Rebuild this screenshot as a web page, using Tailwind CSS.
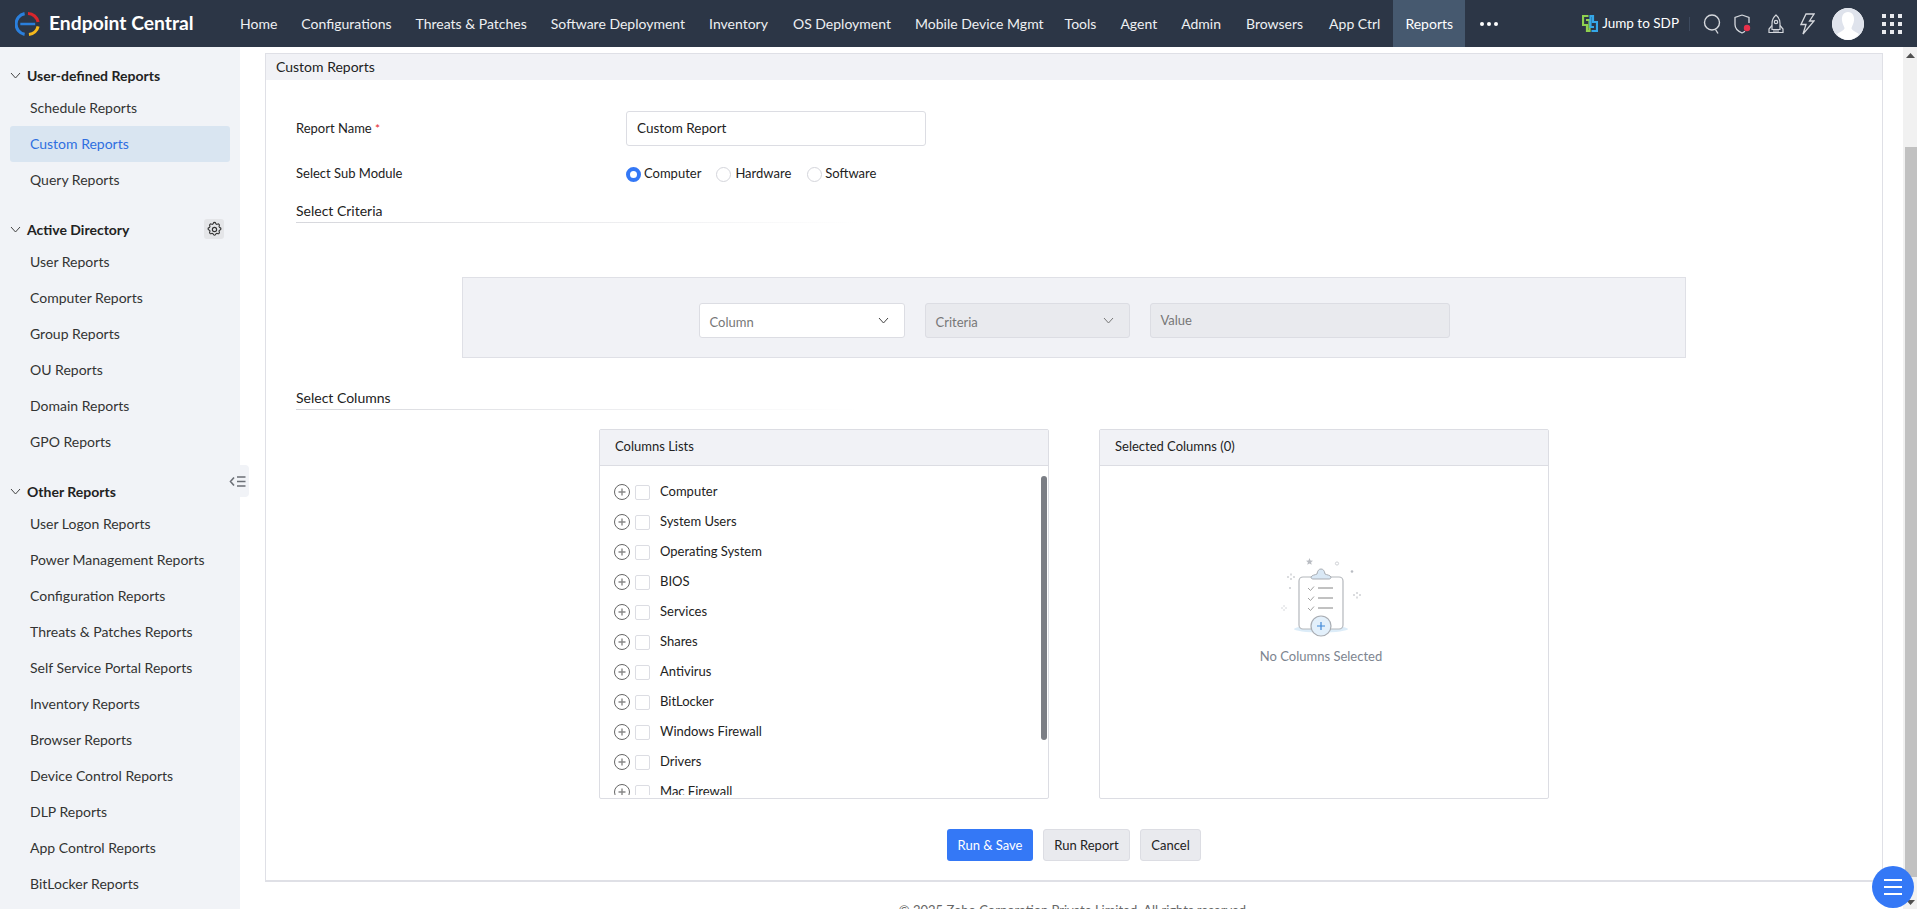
<!DOCTYPE html>
<html lang="en">
<head>
    <meta charset="UTF-8">
    <meta name="viewport" content="width=device-width, initial-scale=1.0">
    <title>Endpoint Central: Custom Reports</title>
    <script src="https://cdn.jsdelivr.net/npm/@tailwindcss/browser@4"></script>
</head>
<body class="h-[909px] overflow-hidden flex flex-col relative bg-white text-[14px] text-[#222] [font-family:Lato,sans-serif]">
    <!-- Navbar -->
    <nav class="h-[47px] shrink-0 bg-[#2c3646] flex items-center text-[#eef0f3]">
        <div class="w-[228px] shrink-0 flex items-center pl-[15px]">
            <svg class="w-[25px] h-[26px]" viewBox="0 0 26 26" fill="none">
                <path d="M10 2.200A11 11 0 0 0 10 23.800" stroke="#2a7fdc" stroke-width="3.200"/>
                <path d="M5.500 13H21" stroke="#2a7fdc" stroke-width="2.600"/>
                <path d="M13.500 2A11 11 0 0 1 24 11" stroke="#d8262c" stroke-width="3.200"/>
                <path d="M24 15.500A11 11 0 0 1 14.500 24" stroke="#f5b81c" stroke-width="3.200"/>
            </svg>
            <span class="ml-[9px] text-[19.300px] font-bold text-white whitespace-nowrap">Endpoint Central</span>
        </div>
        <a class="px-3 h-full flex items-center whitespace-nowrap">Home</a>
        <a class="px-3 h-full flex items-center whitespace-nowrap">Configurations</a>
        <a class="px-3 h-full flex items-center whitespace-nowrap">Threats &amp; Patches</a>
        <a class="px-3 h-full flex items-center whitespace-nowrap">Software Deployment</a>
        <a class="px-3 h-full flex items-center whitespace-nowrap">Inventory</a>
        <a class="px-3 h-full flex items-center whitespace-nowrap ml-[1px]">OS Deployment</a>
        <a class="px-3 h-full flex items-center whitespace-nowrap">Mobile Device Mgmt</a>
        <a class="px-3 h-full flex items-center whitespace-nowrap ml-[-3px]">Tools</a>
        <a class="px-3 h-full flex items-center whitespace-nowrap">Agent</a>
        <a class="px-3 h-full flex items-center whitespace-nowrap">Admin</a>
        <a class="px-3 h-full flex items-center whitespace-nowrap ml-[1px]">Browsers</a>
        <a class="px-3 h-full flex items-center whitespace-nowrap ml-[2px]">App Ctrl</a>
        <a class="px-3 h-full flex items-center whitespace-nowrap ml-[1px] bg-[#46596f] text-white">Reports</a>
        <div class="ml-[15px] flex gap-[3px]">
            <span class="w-[4px] h-[4px] rounded-full bg-white"></span>
            <span class="w-[4px] h-[4px] rounded-full bg-white"></span>
            <span class="w-[4px] h-[4px] rounded-full bg-white"></span>
        </div>

        <div class="ml-auto flex items-center h-full">
            <svg class="w-[16px] h-[17px]" viewBox="0 0 16 17" fill="none" stroke-width="2.200">
                <path d="M6.500 1H1V10H5V16H7.500V5H4" stroke="#8fd14f"/>
                <path d="M9.500 16H15V7H11V1H8.500V12H12" stroke="#35a7e8"/>
            </svg>
            <span class="ml-[4px] whitespace-nowrap text-[13.500px] text-white">Jump to SDP</span>
            <span class="ml-[10px] w-px h-[14px] bg-[#3d4a5e]"></span>
            <svg class="ml-[13px] w-[18px] h-[20px]" viewBox="0 0 18 20" fill="none" stroke="#d5d8dd" stroke-width="1.400">
                <circle cx="9" cy="8.500" r="7.500"/>
                <path d="M12.500 15.500L15 19.500"/>
            </svg>
            <svg class="ml-[13px] w-[18px] h-[20px]" viewBox="0 0 18 20" fill="none">
                <path d="M8 1L15 3.500V9M8 1L1 3.500V10.500C1 14.500 4.500 17.500 8 19C9 18.600 10 18 11 17.200" stroke="#d5d8dd" stroke-width="1.300"/>
                <circle cx="13" cy="14" r="3.200" fill="#e8304a"/>
            </svg>
            <svg class="ml-[15px] w-[18px] h-[20px]" viewBox="0 0 18 20" fill="none" stroke="#d5d8dd" stroke-width="1.200">
                <path d="M9 1C12 3.500 13 6.500 13 9.500V15.500H5V9.500C5 6.500 6 3.500 9 1Z"/>
                <circle cx="9" cy="8" r="1.700"/>
                <path d="M5 11.500L2 15V18.500H16V15L13 11.500M6 17H12"/>
            </svg>
            <svg class="ml-[15px] w-[15px] h-[22px]" viewBox="0 0 15 22" fill="none" stroke="#d5d8dd" stroke-width="1.300">
                <path d="M6 1H14L9.500 8H14L3 21L6 11.500H1L6 1Z"/>
            </svg>
            <div class="ml-[17px] w-[32px] h-[32px] rounded-full bg-white overflow-hidden">
                <svg class="w-full h-full" viewBox="0 0 32 32">
                    <circle cx="16" cy="16" r="16" fill="#dfe3ec"/>
                    <path d="M16 4C20.500 4 22.500 8 22 12.500C21.700 16 20 18 19.500 20C19.200 22 24 24 27 26C24 30 20 32 16 32C12 32 8 30 5 26C8 24 12.800 22 12.500 20C12 18 10.300 16 10 12.500C9.500 8 11.500 4 16 4Z" fill="#fff"/>
                </svg>
            </div>
            <div class="ml-[18px] mr-[15px] grid grid-cols-3 gap-[4px]">
                <span class="w-[4px] h-[4px] bg-[#e8eaee]"></span><span class="w-[4px] h-[4px] bg-[#e8eaee]"></span><span class="w-[4px] h-[4px] bg-[#e8eaee]"></span>
                <span class="w-[4px] h-[4px] bg-[#e8eaee]"></span><span class="w-[4px] h-[4px] bg-[#e8eaee]"></span><span class="w-[4px] h-[4px] bg-[#e8eaee]"></span>
                <span class="w-[4px] h-[4px] bg-[#e8eaee]"></span><span class="w-[4px] h-[4px] bg-[#e8eaee]"></span><span class="w-[4px] h-[4px] bg-[#e8eaee]"></span>
            </div>
        </div>
    </nav>

    <div class="flex flex-1 min-h-0">
        <!-- Sidebar -->
        <aside class="w-[240px] shrink-0 bg-[#f1f3f7] pt-[15px] relative">
            <div class="h-[28px] pb-[2px] flex items-center pl-[10px] font-bold text-[#222]">
                <svg class="w-[11px] h-[7px] mr-[6px]" viewBox="0 0 11 7" fill="none" stroke="#444"><path d="M1 1L5.500 6L10 1"/></svg>User-defined Reports
            </div>
            <a class="block h-[36px] leading-[36px] pl-[30px] text-[#333]">Schedule Reports</a>
            <a class="block h-[36px] leading-[36px] pl-[20px] ml-[10px] w-[220px] rounded-[3px] bg-[#d9e5f1] text-[#2f6fe0]">Custom Reports</a>
            <a class="block h-[36px] leading-[36px] pl-[30px] text-[#333]">Query Reports</a>

            <div class="mt-[18px] h-[28px] pb-[2px] flex items-center pl-[10px] font-bold text-[#222]">
                <svg class="w-[11px] h-[7px] mr-[6px]" viewBox="0 0 11 7" fill="none" stroke="#444"><path d="M1 1L5.500 6L10 1"/></svg>Active Directory
                <span class="ml-auto mr-[16px] w-[20px] h-[20px] rounded-[3px] bg-[#e4e5e8] flex items-center justify-center">
                    <svg class="w-[17px] h-[17px]" viewBox="0 0 24 24" fill="none" stroke="#333" stroke-width="1.600">
                        <path d="M10.300 3.300c.4-1.700 3-1.700 3.400 0a1.700 1.700 0 0 0 2.600 1.100c1.500-.9 3.300.8 2.400 2.400a1.700 1.700 0 0 0 1 2.500c1.800.4 1.800 3 0 3.400a1.700 1.700 0 0 0-1 2.600c.9 1.500-.9 3.300-2.400 2.400a1.700 1.700 0 0 0-2.600 1c-.4 1.800-3 1.800-3.400 0a1.700 1.700 0 0 0-2.600-1c-1.500.9-3.300-.9-2.400-2.400a1.700 1.700 0 0 0-1-2.600c-1.800-.4-1.800-3 0-3.400a1.700 1.700 0 0 0 1-2.500c-.9-1.600.9-3.300 2.400-2.400a1.700 1.700 0 0 0 2.600-1.100Z"/>
                        <circle cx="12" cy="12" r="3"/>
                    </svg>
                </span>
            </div>
            <a class="block h-[36px] leading-[36px] pl-[30px] text-[#333]">User Reports</a>
            <a class="block h-[36px] leading-[36px] pl-[30px] text-[#333]">Computer Reports</a>
            <a class="block h-[36px] leading-[36px] pl-[30px] text-[#333]">Group Reports</a>
            <a class="block h-[36px] leading-[36px] pl-[30px] text-[#333]">OU Reports</a>
            <a class="block h-[36px] leading-[36px] pl-[30px] text-[#333]">Domain Reports</a>
            <a class="block h-[36px] leading-[36px] pl-[30px] text-[#333]">GPO Reports</a>

            <div class="mt-[18px] h-[28px] pb-[2px] flex items-center pl-[10px] font-bold text-[#222]">
                <svg class="w-[11px] h-[7px] mr-[6px]" viewBox="0 0 11 7" fill="none" stroke="#444"><path d="M1 1L5.500 6L10 1"/></svg>Other Reports
            </div>
            <a class="block h-[36px] leading-[36px] pl-[30px] text-[#333]">User Logon Reports</a>
            <a class="block h-[36px] leading-[36px] pl-[30px] text-[#333]">Power Management Reports</a>
            <a class="block h-[36px] leading-[36px] pl-[30px] text-[#333]">Configuration Reports</a>
            <a class="block h-[36px] leading-[36px] pl-[30px] text-[#333]">Threats &amp; Patches Reports</a>
            <a class="block h-[36px] leading-[36px] pl-[30px] text-[#333]">Self Service Portal Reports</a>
            <a class="block h-[36px] leading-[36px] pl-[30px] text-[#333]">Inventory Reports</a>
            <a class="block h-[36px] leading-[36px] pl-[30px] text-[#333]">Browser Reports</a>
            <a class="block h-[36px] leading-[36px] pl-[30px] text-[#333]">Device Control Reports</a>
            <a class="block h-[36px] leading-[36px] pl-[30px] text-[#333]">DLP Reports</a>
            <a class="block h-[36px] leading-[36px] pl-[30px] text-[#333]">App Control Reports</a>
            <a class="block h-[36px] leading-[36px] pl-[30px] text-[#333]">BitLocker Reports</a>

            <!-- collapse handle -->
            <div class="absolute top-[418px] left-[226px] w-[23px] h-[32px] rounded-r-[4px] bg-[#f1f3f7] flex items-center justify-center">
                <svg class="w-[17px] h-[13px]" viewBox="0 0 17 13" fill="none" stroke="#6b6f76" stroke-width="1.600">
                    <path d="M5 2.500L1.500 6.500L5 10.500M8 2H16.500M8 6.500H16.500M8 11H16.500"/>
                </svg>
            </div>
        </aside>

        <!-- Content -->
        <main class="flex-1 min-w-0 pt-[6px] pl-[25px] pr-[20px]">
            <section class="h-[829px] border border-[#dfe0e6] border-b-2">
                <h2 class="h-[26px] leading-[26px] pl-[10px] bg-[#f1f2f6] text-[#222]">Custom Reports</h2>

                <div class="pt-[31px] pl-[30px] text-[13px]">
                    <div class="flex items-center h-[35px]">
                        <label class="w-[330px]">Report Name <span class="text-[#e5262c] text-[12px] leading-none">*</span></label>
                        <div class="w-[300px] h-[35px] rounded-[3px] border border-[#dcdde3] px-[10px] leading-[33px] text-[13.500px]">Custom Report</div>
                    </div>
                    <div class="mt-[18px] flex items-center h-[20px]">
                        <label class="w-[330px]">Select Sub Module</label>
                        <span class="w-[15px] h-[15px] rounded-full border-[4px] border-[#3478f6] bg-white"></span>
                        <span class="ml-[3px]">Computer</span>
                        <span class="ml-[15px] w-[15px] h-[15px] rounded-full border border-[#d4d5db]"></span>
                        <span class="ml-[4px]">Hardware</span>
                        <span class="ml-[16px] w-[15px] h-[15px] rounded-full border border-[#d4d5db]"></span>
                        <span class="ml-[3px]">Software</span>
                    </div>
                    <h3 class="mt-[16px] h-[22px] leading-[21px] text-[14px] text-[#222]">Select Criteria</h3>
                    <div class="w-[564px] h-px bg-gradient-to-r from-[#d6d7dc] to-transparent"></div>
                </div>

                <div class="mt-[54px] mx-auto w-[1224px] h-[81px] bg-[#f1f2f6] border border-[#dfe0e6] flex justify-center gap-[20px] pt-[25px] text-[13px]">
                    <div class="w-[206px] h-[35px] rounded-[3px] border border-[#dcdde3] bg-white pl-[10px] pr-[15px] flex items-center justify-between text-[#777]">
                        <span class="pt-[4px]">Column</span>
                        <svg class="w-[11px] h-[7px]" viewBox="0 0 11 7" fill="none" stroke="#444"><path d="M1 1L5.500 6L10 1"/></svg>
                    </div>
                    <div class="w-[205px] h-[35px] rounded-[3px] border border-[#dcdde3] bg-[#e9eaee] pl-[10px] pr-[15px] flex items-center justify-between text-[#777]">
                        <span class="pt-[4px]">Criteria</span>
                        <svg class="w-[11px] h-[7px]" viewBox="0 0 11 7" fill="none" stroke="#777"><path d="M1 1L5.500 6L10 1"/></svg>
                    </div>
                    <div class="w-[300px] h-[35px] rounded-[3px] border border-[#dcdde3] bg-[#e9eaee] pl-[10px] leading-[32px] text-[#777]">Value</div>
                </div>

                <div class="pt-[29px] pl-[30px]">
                    <h3 class="h-[22px] leading-[21px] text-[#222]">Select Columns</h3>
                    <div class="w-[564px] h-px bg-gradient-to-r from-[#d6d7dc] to-transparent"></div>
                </div>

                <div class="mt-[19px] flex justify-center gap-[50px] text-[13px]">
                    <div class="w-[450px] h-[370px] rounded-[2px] border border-[#dcdde3] relative">
                        <div class="h-[36px] leading-[33px] pl-[15px] bg-[#f1f2f6] border-b border-[#dcdde3]">Columns Lists</div>
                        <div class="h-[329px] overflow-hidden pt-[11px] pl-[14px]">
                            <div class="h-[30px] flex items-center">
                                <svg class="w-[16px] h-[16px]" viewBox="0 0 16 16" fill="none" stroke="#666"><circle cx="8" cy="8" r="7.500"/><path d="M4.500 8H11.500M8 4.500V11.500" stroke="#888" stroke-width="1.400"/></svg>
                                <span class="ml-[5px] w-[15px] h-[15px] rounded-[2px] border border-[#dcdde3]"></span>
                                <span class="ml-[10px]">Computer</span>
                            </div>
                            <div class="h-[30px] flex items-center">
                                <svg class="w-[16px] h-[16px]" viewBox="0 0 16 16" fill="none" stroke="#666"><circle cx="8" cy="8" r="7.500"/><path d="M4.500 8H11.500M8 4.500V11.500" stroke="#888" stroke-width="1.400"/></svg>
                                <span class="ml-[5px] w-[15px] h-[15px] rounded-[2px] border border-[#dcdde3]"></span>
                                <span class="ml-[10px]">System Users</span>
                            </div>
                            <div class="h-[30px] flex items-center">
                                <svg class="w-[16px] h-[16px]" viewBox="0 0 16 16" fill="none" stroke="#666"><circle cx="8" cy="8" r="7.500"/><path d="M4.500 8H11.500M8 4.500V11.500" stroke="#888" stroke-width="1.400"/></svg>
                                <span class="ml-[5px] w-[15px] h-[15px] rounded-[2px] border border-[#dcdde3]"></span>
                                <span class="ml-[10px]">Operating System</span>
                            </div>
                            <div class="h-[30px] flex items-center">
                                <svg class="w-[16px] h-[16px]" viewBox="0 0 16 16" fill="none" stroke="#666"><circle cx="8" cy="8" r="7.500"/><path d="M4.500 8H11.500M8 4.500V11.500" stroke="#888" stroke-width="1.400"/></svg>
                                <span class="ml-[5px] w-[15px] h-[15px] rounded-[2px] border border-[#dcdde3]"></span>
                                <span class="ml-[10px]">BIOS</span>
                            </div>
                            <div class="h-[30px] flex items-center">
                                <svg class="w-[16px] h-[16px]" viewBox="0 0 16 16" fill="none" stroke="#666"><circle cx="8" cy="8" r="7.500"/><path d="M4.500 8H11.500M8 4.500V11.500" stroke="#888" stroke-width="1.400"/></svg>
                                <span class="ml-[5px] w-[15px] h-[15px] rounded-[2px] border border-[#dcdde3]"></span>
                                <span class="ml-[10px]">Services</span>
                            </div>
                            <div class="h-[30px] flex items-center">
                                <svg class="w-[16px] h-[16px]" viewBox="0 0 16 16" fill="none" stroke="#666"><circle cx="8" cy="8" r="7.500"/><path d="M4.500 8H11.500M8 4.500V11.500" stroke="#888" stroke-width="1.400"/></svg>
                                <span class="ml-[5px] w-[15px] h-[15px] rounded-[2px] border border-[#dcdde3]"></span>
                                <span class="ml-[10px]">Shares</span>
                            </div>
                            <div class="h-[30px] flex items-center">
                                <svg class="w-[16px] h-[16px]" viewBox="0 0 16 16" fill="none" stroke="#666"><circle cx="8" cy="8" r="7.500"/><path d="M4.500 8H11.500M8 4.500V11.500" stroke="#888" stroke-width="1.400"/></svg>
                                <span class="ml-[5px] w-[15px] h-[15px] rounded-[2px] border border-[#dcdde3]"></span>
                                <span class="ml-[10px]">Antivirus</span>
                            </div>
                            <div class="h-[30px] flex items-center">
                                <svg class="w-[16px] h-[16px]" viewBox="0 0 16 16" fill="none" stroke="#666"><circle cx="8" cy="8" r="7.500"/><path d="M4.500 8H11.500M8 4.500V11.500" stroke="#888" stroke-width="1.400"/></svg>
                                <span class="ml-[5px] w-[15px] h-[15px] rounded-[2px] border border-[#dcdde3]"></span>
                                <span class="ml-[10px]">BitLocker</span>
                            </div>
                            <div class="h-[30px] flex items-center">
                                <svg class="w-[16px] h-[16px]" viewBox="0 0 16 16" fill="none" stroke="#666"><circle cx="8" cy="8" r="7.500"/><path d="M4.500 8H11.500M8 4.500V11.500" stroke="#888" stroke-width="1.400"/></svg>
                                <span class="ml-[5px] w-[15px] h-[15px] rounded-[2px] border border-[#dcdde3]"></span>
                                <span class="ml-[10px]">Windows Firewall</span>
                            </div>
                            <div class="h-[30px] flex items-center">
                                <svg class="w-[16px] h-[16px]" viewBox="0 0 16 16" fill="none" stroke="#666"><circle cx="8" cy="8" r="7.500"/><path d="M4.500 8H11.500M8 4.500V11.500" stroke="#888" stroke-width="1.400"/></svg>
                                <span class="ml-[5px] w-[15px] h-[15px] rounded-[2px] border border-[#dcdde3]"></span>
                                <span class="ml-[10px]">Drivers</span>
                            </div>
                            <div class="h-[30px] flex items-center">
                                <svg class="w-[16px] h-[16px]" viewBox="0 0 16 16" fill="none" stroke="#666"><circle cx="8" cy="8" r="7.500"/><path d="M4.500 8H11.500M8 4.500V11.500" stroke="#888" stroke-width="1.400"/></svg>
                                <span class="ml-[5px] w-[15px] h-[15px] rounded-[2px] border border-[#dcdde3]"></span>
                                <span class="ml-[10px]">Mac Firewall</span>
                            </div>
                        </div>
                        <!-- list scrollbar thumb -->
                        <div class="absolute top-[46px] right-[1px] w-[6px] h-[264px] rounded-[3px] bg-[#7b7e85]"></div>
                    </div>

                    <div class="w-[450px] h-[370px] rounded-[2px] border border-[#dcdde3]">
                        <div class="h-[36px] leading-[33px] pl-[15px] bg-[#f1f2f6] border-b border-[#dcdde3]">Selected Columns (0)</div>
                        <div class="flex flex-col items-center pt-[92px] pr-[6px]">
                            <svg class="w-[80px] h-[80px]" viewBox="0 0 80 80" fill="none">
                                <ellipse cx="40" cy="71" rx="27" ry="3.500" fill="#dcecf8"/>
                                <rect x="18" y="19" width="44" height="52" rx="4" fill="#fff" stroke="#b4b7bc" stroke-width="1.200"/>
                                <path d="M30 19C31 17 34 17 36 16C36.500 12.500 38 11 40 11C42 11 43.500 12.500 44 16C46 17 49 17 50 19C50 20.500 49 21 48 21H32C31 21 30 20.500 30 19Z" fill="#d9e8f5" stroke="#a9adb3"/>
                                <path d="M27 30L29.500 32.500L33 28.500M27 40L29.500 42.500L33 38.500M27 50L29.500 52.500L33 48.500" stroke="#999" stroke-width="0.900"/>
                                <path d="M37 30H52M37 40H52M37 50H52" stroke="#777" stroke-width="0.900"/>
                                <circle cx="40" cy="68" r="10" fill="#e3f0fb" stroke="#a9adb3" stroke-width="1.200"/>
                                <path d="M36 68H44M40 64V72" stroke="#3f88d8" stroke-width="1.200"/>
                                <path d="M28.500 0L29.500 2.500L32 2.700L30.100 4.300L30.700 6.800L28.500 5.500L26.300 6.800L26.900 4.300L25 2.700L27.500 2.500Z" fill="#b9bcc2"/>
                                <circle cx="56" cy="5.500" r="1.600" stroke="#c4c7cc" stroke-width="0.800"/>
                                <circle cx="71" cy="13.500" r="1.300" fill="#b9bcc2"/>
                                <circle cx="9" cy="30" r="0.900" fill="#c4c7cc"/>
                                <path d="M10 15.500V17.500M10 20V22M6 19H8M12 19H14M76 34V36M76 38.500V40.500M72 37H74M78 37H80" stroke="#aeb1b7" stroke-width="0.900"/>
                                <path d="M3 47V49M3 51V53M0 50H2M4 50H6" stroke="#ccced3" stroke-width="0.800"/>
                            </svg>
                            <span class="mt-[9px] text-[#7d8590]">No Columns Selected</span>
                        </div>
                    </div>
                </div>

                <div class="mt-[30px] flex justify-center gap-[10px] text-[13px]">
                    <button class="w-[86px] h-[32px] pt-[1px] rounded-[3px] bg-[#3478f6] text-white">Run &amp; Save</button>
                    <button class="w-[87px] h-[32px] pt-[1px] rounded-[3px] bg-[#e9eaee] border border-[#dcdde3]">Run Report</button>
                    <button class="w-[61px] h-[32px] pt-[1px] rounded-[3px] bg-[#e9eaee] border border-[#dcdde3]">Cancel</button>
                </div>
            </section>
            <p class="mt-[19px] text-center text-[13px] text-[#666] whitespace-nowrap">© 2025 Zoho Corporation Private Limited. All rights reserved.</p>
        </main>

        <!-- Page scrollbar -->
        <div class="w-[14px] shrink-0 bg-[#f1f1f1] flex flex-col items-end">
            <svg class="mt-[6px] mr-[2px] w-[9px] h-[5px]" viewBox="0 0 9 5"><path d="M4.500 0L9 5H0Z" fill="#505050"/></svg>
            <div class="mt-[89px] w-[12px] h-[730px] bg-[#c1c1c1]"></div>
            <svg class="mt-[23px] mr-[2px] w-[9px] h-[5px]" viewBox="0 0 9 5"><path d="M0 0H9L4.500 5Z" fill="#505050"/></svg>
        </div>
    </div>

    <!-- Floating menu -->
    <button class="absolute left-[1872px] top-[866px] w-[42px] h-[42px] rounded-full bg-[#3478f6] flex flex-col items-center justify-center gap-[5px]">
        <span class="w-[18px] h-[2px] bg-white"></span>
        <span class="w-[18px] h-[2px] bg-white"></span>
        <span class="w-[18px] h-[2px] bg-white"></span>
    </button>
</body>
</html>
